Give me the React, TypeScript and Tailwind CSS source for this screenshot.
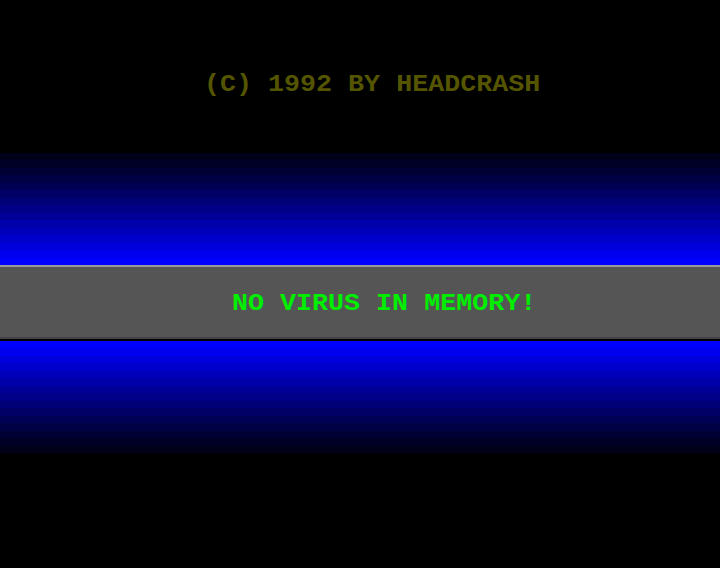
import React from "react";

const topBands = [
  "bg-[#000018]",
  "bg-[#000026]",
  "bg-[#000035]",
  "bg-[#000044]",
  "bg-[#000055]",
  "bg-[#000066]",
  "bg-[#000077]",
  "bg-[#000088]",
  "bg-[#000099]",
  "bg-[#0000aa]",
  "bg-[#0000bb]",
  "bg-[#0000cc]",
  "bg-[#0000dd]",
  "bg-[#0000ee]",
  "bg-[#0000ff]",
];

const bottomBands = [...topBands].reverse();

const font = { fontFamily: '"Liberation Mono", "DejaVu Sans Mono", monospace' };

export default function App() {
  return (
    <div className="w-[720px] h-[568px] bg-black overflow-hidden flex flex-col">
      <div className="h-[153px] pt-[77px] pl-[204px]">
        <div
          className="text-[23px] leading-[16px] font-bold scale-x-[1.16] origin-left text-[#555500] whitespace-pre"
          style={font}
        >
          (C) 1992 BY HEADCRASH
        </div>
      </div>
      <div className="h-[112px] flex flex-col">
        {topBands.map((c, i) => (
          <div key={i} className={`flex-1 ${c}`} />
        ))}
      </div>
      <div className="h-[2px] bg-[#999999]" />
      <div className="h-[70px] bg-[#555555] pt-[29px] pl-[232px]">
        <div
          className="text-[23px] leading-[16px] font-bold scale-x-[1.16] origin-left text-[#00ee00] whitespace-pre"
          style={font}
        >
          NO VIRUS IN MEMORY!
        </div>
      </div>
      <div className="h-[2px] bg-[#444444]" />
      <div className="h-[2px] bg-black" />
      <div className="h-[112px] flex flex-col">
        {bottomBands.map((c, i) => (
          <div key={i} className={`flex-1 ${c}`} />
        ))}
      </div>
      <div className="flex-1 bg-black" />
    </div>
  );
}
